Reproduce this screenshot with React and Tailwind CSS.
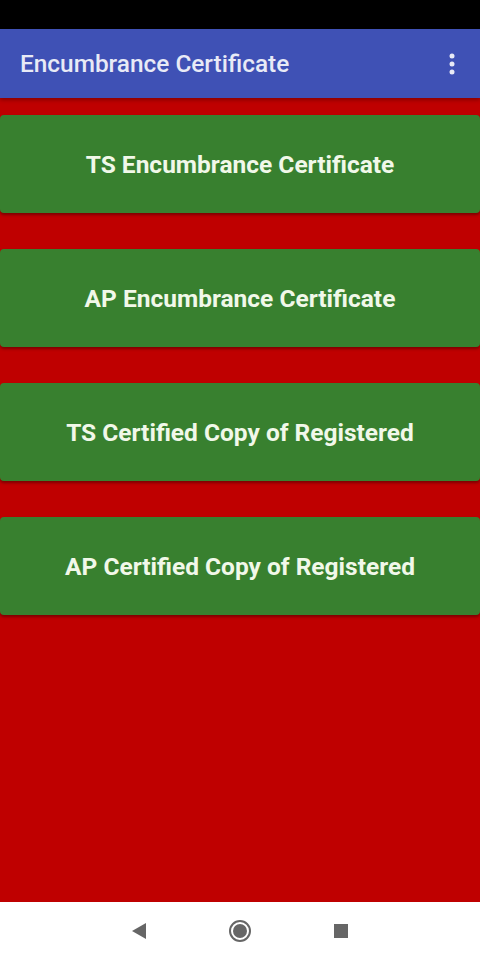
import React from "react";

const items = [
  "TS Encumbrance Certificate",
  "AP Encumbrance Certificate",
  "TS Certified Copy of Registered",
  "AP Certified Copy of Registered",
];

const MenuDots = () => (
  <svg width="6" height="22" viewBox="0 0 6 22" className="fill-[#e8eaf6]">
    <circle cx="3" cy="3" r="2.5" />
    <circle cx="3" cy="11" r="2.5" />
    <circle cx="3" cy="19" r="2.5" />
  </svg>
);

const NavBar = () => (
  <div className="h-[58px] bg-white flex items-center justify-center gap-[77px]">
    <div className="w-6 flex justify-center">
      <svg width="16" height="18" viewBox="0 0 16 18" className="fill-[#666]">
        <path d="M15 1 L1 9 L15 17 Z" />
      </svg>
    </div>
    <svg width="24" height="24" viewBox="0 0 24 24">
      <circle cx="12" cy="12" r="10" fill="none" stroke="#666" strokeWidth="2" />
      <circle cx="12" cy="12" r="7" fill="#666" />
    </svg>
    <div className="w-6 flex justify-center">
      <svg width="16" height="16" viewBox="0 0 16 16" className="fill-[#666]">
        <rect x="1" y="1" width="14" height="14" />
      </svg>
    </div>
  </div>
);

export default function App() {
  return (
    <div className="w-[480px] h-[960px] flex flex-col bg-[#bf0000] font-['Roboto',sans-serif]">
      <div className="h-[29px] bg-black" />
      <div className="h-[69px] bg-[#3f51b5] flex items-center justify-between pl-5 pr-[25px] shadow-[0_2px_4px_rgba(0,0,0,0.3)] relative z-10">
        <h1 className="text-[24.4px] font-medium text-[#e8eaf6] pt-[2px]">Encumbrance Certificate</h1>
        <MenuDots />
      </div>
      <div className="flex-1 flex flex-col gap-9 pt-[17px]">
        {items.map((t) => (
          <button
            key={t}
            className="h-[98px] w-full bg-[#38802f] rounded-[4px] text-[#f1f8e9] text-[24.5px] font-bold pt-[3px] shadow-[0_2px_3px_rgba(0,0,0,0.35)]"
          >
            {t}
          </button>
        ))}
      </div>
      <NavBar />
    </div>
  );
}
